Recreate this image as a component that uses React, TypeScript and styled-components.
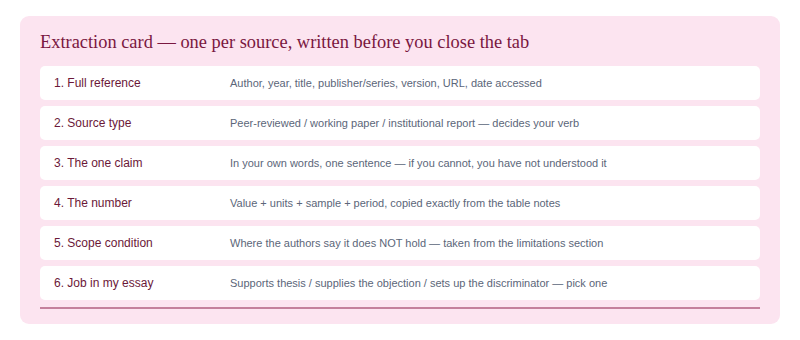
import React from "react";
import styled, { createGlobalStyle } from "styled-components";

const Global = createGlobalStyle`
  html, body { margin: 0; padding: 0; background: #ffffff; }
  body { padding: 16px 20px; }
`;

const Card = styled.section`
  width: 760px;
  box-sizing: border-box;
  background: #fce4f0;
  border-radius: 9px;
  padding: 15px 20px 15px;
`;

const Title = styled.h2`
  margin: 0 0 13px;
  font-family: "Liberation Serif", "Times New Roman", serif;
  font-weight: 400;
  font-size: 18.4px;
  line-height: 22px;
  color: #7a1740;
`;

const List = styled.div`
  display: flex;
  flex-direction: column;
  gap: 6px;
  padding-bottom: 7px;
  border-bottom: 2px solid #c4809c;
`;

const Row = styled.div`
  display: grid;
  grid-template-columns: 176px 1fr;
  align-items: center;
  height: 34px;
  padding: 0 14px;
  background: #ffffff;
  border-radius: 5px;
`;

const Label = styled.span`
  font-family: "Liberation Sans", Arial, sans-serif;
  font-size: 12px;
  color: #6b1838;
`;

const Value = styled.span`
  font-family: "Liberation Sans", Arial, sans-serif;
  font-size: 11px;
  color: #5b6679;
`;

const rows: [string, string][] = [
  ["1. Full reference", "Author, year, title, publisher/series, version, URL, date accessed"],
  ["2. Source type", "Peer-reviewed / working paper / institutional report — decides your verb"],
  ["3. The one claim", "In your own words, one sentence — if you cannot, you have not understood it"],
  ["4. The number", "Value + units + sample + period, copied exactly from the table notes"],
  ["5. Scope condition", "Where the authors say it does NOT hold — taken from the limitations section"],
  ["6. Job in my essay", "Supports thesis / supplies the objection / sets up the discriminator — pick one"],
];

export default function App() {
  return (
    <>
      <Global />
      <Card>
        <Title>Extraction card — one per source, written before you close the tab</Title>
        <List>
          {rows.map(([l, v]) => (
            <Row key={l}>
              <Label>{l}</Label>
              <Value>{v}</Value>
            </Row>
          ))}
        </List>
      </Card>
    </>
  );
}
